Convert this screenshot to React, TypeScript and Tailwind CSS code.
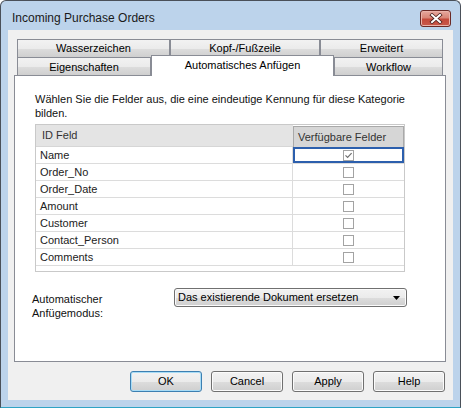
import React from 'react';

const fields = ['Name', 'Order_No', 'Order_Date', 'Amount', 'Customer', 'Contact_Person', 'Comments'];

const btnFace = "bg-[linear-gradient(#f2f2f2_0%,#ebebeb_50%,#dddddd_51%,#cfcfcf_100%)]";

function CheckBox({ checked }: { checked?: boolean }) {
  return (
    <span className="w-[11px] h-[11px] border border-[#a3a3a3] bg-white flex items-center justify-center">
      {checked && (
        <svg width="9" height="9" viewBox="0 0 9 9">
          <path d="M1.5 4.3 L3.6 6.4 L7.6 2.2" fill="none" stroke="#707070" strokeWidth="1.2" />
        </svg>
      )}
    </span>
  );
}

function Btn({ label, primary }: { label: string; primary?: boolean }) {
  return (
    <button
      className={
        'w-[72px] h-[21px] rounded-[3px] border text-[11px] leading-none text-black ' +
        btnFace +
        (primary
          ? ' border-[#3c7fb1] shadow-[inset_0_0_0_1px_#a8dcf6]'
          : ' border-[#707070] shadow-[inset_0_0_0_1px_#fbfbfb]')
      }
    >
      {label}
    </button>
  );
}

export default function App() {
  return (
    <div className="w-[461px] h-[408px] flex flex-col bg-[#bcd3eb] border border-[#4a5059] border-b-[#2fa3c4] rounded-t-[6px] overflow-hidden font-['Liberation_Sans',Arial,sans-serif] select-none">
      {/* title bar */}
      <div className="h-[29px] flex items-start shrink-0">
        <span className="pl-[11px] pt-[10px] text-[12px] leading-[15px] text-[#1a1a1a]">Incoming Purchase Orders</span>
        <div className="ml-auto mr-[9px] mt-[9px] w-[31px] h-[17px] rounded-[3px] border border-[#6b2a26] bg-[linear-gradient(#e6a89e_0%,#d98677_45%,#c44a3b_55%,#c9584a_100%)] flex items-center justify-center shadow-[inset_0_0_0_1px_#eab3aa]">
          <svg width="14" height="11" viewBox="0 0 14 11">
            <path d="M3 2 L11 9 M11 2 L3 9" stroke="#4a1f1c" strokeWidth="3.6" strokeLinecap="square" />
            <path d="M3 2 L11 9 M11 2 L3 9" stroke="#ffffff" strokeWidth="2" strokeLinecap="square" />
          </svg>
        </div>
      </div>

      {/* client area */}
      <div className="mx-[7px] h-[370px] bg-[#f0f0f0] flex flex-col pt-[9px] text-[11px] text-black">
        <div className="ml-[6px] w-[432px] flex flex-col">
          {/* tabs */}
          <div className="pl-[3px] flex flex-col">
            <div className="flex h-[18px]">
              <div className={'w-[153px] border border-b-0 border-[#898c95] flex items-center justify-center ' + btnFace}>Wasserzeichen</div>
              <div className={'w-[150px] border border-b-0 border-[#898c95] flex items-center justify-center ' + btnFace}>Kopf-/Fußzeile</div>
              <div className={'w-[123px] border border-b-0 border-[#898c95] flex items-center justify-center ' + btnFace}>Erweitert</div>
            </div>
            <div className="flex h-[18px]">
              <div className={'w-[134px] border border-b-0 border-[#898c95] flex items-center justify-center pt-[2px] ' + btnFace}>Eigenschaften</div>
              <div className="relative z-10 self-start -mt-[2px] w-[183px] h-[21px] border border-b-0 border-[#898c95] bg-white flex items-center justify-center pb-[2px]">
                Automatisches Anfügen
              </div>
              <div className={'w-[109px] border border-b-0 border-[#898c95] flex items-center justify-center pt-[2px] ' + btnFace}>Workflow</div>
            </div>
          </div>

          {/* panel */}
          <div className="h-[287px] border border-[#898c95] bg-white flex flex-col">
            <p className="pl-[20px] pt-[16px] leading-[14px] text-[#111]">
              Wählen Sie die Felder aus, die eine eindeutige Kennung für diese Kategorie
              <br />
              bilden.
            </p>

            <div className="ml-[20px] mt-[4px] w-[370px] h-[148px] border border-[#c9c9c9] bg-white flex flex-col">
              <div className="flex h-[22px]">
                <div className="w-[257px] bg-[#e4e4e4] border-b border-[#d6d6d6] pl-[6px] flex items-center text-[#333]">ID Feld</div>
                <div className="flex-1 bg-[#d6d6d6] border border-b-0 border-[#a9a9a9] mt-[1px] pl-[4px] flex items-center text-[#333]">
                  Verfügbare Felder
                </div>
              </div>
              {fields.map((f, i) => (
                <div key={f} className="flex h-[17px] border-b border-[#dcdcdc]">
                  <div className="w-[257px] border-r border-[#dcdcdc] pl-[4px] flex items-center text-[#222]">{f}</div>
                  <div
                    className={
                      'flex-1 flex items-center justify-center' +
                      (i === 0 ? ' shadow-[inset_0_0_0_2px_#2c5fad]' : '')
                    }
                  >
                    <CheckBox checked={i === 0} />
                  </div>
                </div>
              ))}
            </div>

            <div className="mt-[16px] pl-[17px] flex items-start">
              <div className="w-[142px] pt-[4px] leading-[14px] text-[#111]">
                Automatischer
                <br />
                Anfügemodus:
              </div>
              <div className={'w-[233px] h-[19px] rounded-[3px] border border-[#707070] shadow-[inset_0_0_0_1px_#fbfbfb] flex items-center pl-[3px] pr-[6px] ' + btnFace}>
                <span className="flex-1 text-black">Das existierende Dokument ersetzen</span>
                <svg width="7" height="4" viewBox="0 0 7 4">
                  <path d="M0 0 H7 L3.5 4 Z" fill="#000" />
                </svg>
              </div>
            </div>
          </div>
        </div>

        {/* buttons */}
        <div className="mt-[9px] pl-[122px] flex gap-[9px]">
          <Btn label="OK" primary />
          <Btn label="Cancel" />
          <Btn label="Apply" />
          <Btn label="Help" />
        </div>
      </div>
    </div>
  );
}
